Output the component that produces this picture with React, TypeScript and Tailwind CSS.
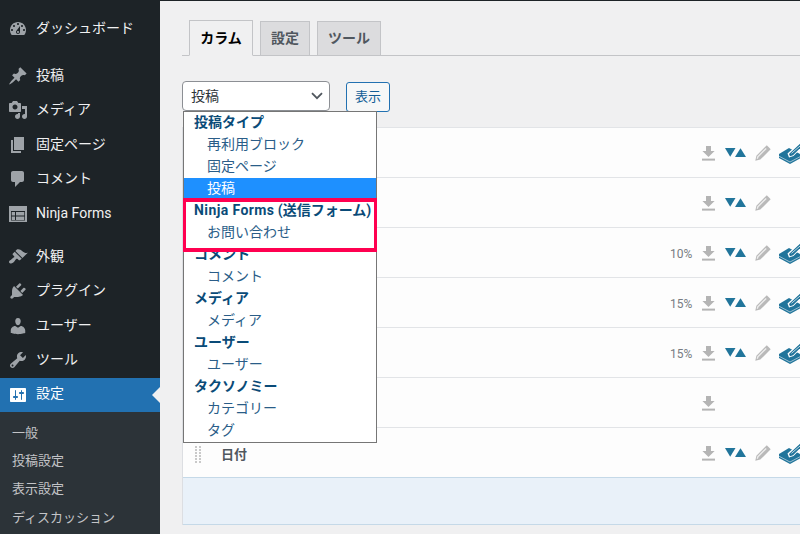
import React from "react";

const P: Record<string, string> = {
  dash: "M3.76 16h12.48c1.1-1.37 1.76-3.11 1.76-5 0-4.42-3.58-8-8-8s-8 3.58-8 8c0 1.89.66 3.63 1.76 5zM10 4c.55 0 1 .45 1 1s-.45 1-1 1-1-.45-1-1 .45-1 1-1zM6 6c.55 0 1 .45 1 1s-.45 1-1 1-1-.45-1-1 .45-1 1-1zm8 0c.55 0 1 .45 1 1s-.45 1-1 1-1-.45-1-1 .45-1 1-1zm-5.37 5.55L12 7v6c0 1.1-.9 2-2 2s-2-.9-2-2c0-.57.24-1.08.63-1.45zM4 10c.55 0 1 .45 1 1s-.45 1-1 1-1-.45-1-1 .45-1 1-1zm12 0c.55 0 1 .45 1 1s-.45 1-1 1-1-.45-1-1 .45-1 1-1zm-5 3c0-.55-.45-1-1-1s-1 .45-1 1 .45 1 1 1 1-.45 1-1z",
  post: "M10.44 3.02l1.82-1.82 6.36 6.35-1.83 1.82c-1.05-.68-2.48-.57-3.41.36l-.75.75c-.92.93-1.04 2.35-.35 3.41l-1.83 1.82-2.41-2.41-2.8 2.79c-.42.42-3.38 2.71-3.8 2.29s1.86-3.39 2.28-3.81l2.79-2.79L4.1 9.36l1.83-1.82c1.05.69 2.48.57 3.4-.36l.75-.75c.93-.92 1.05-2.35.36-3.41z",
  media: "M13 11V4c0-.55-.45-1-1-1h-1.67L9 1H5L3.67 3H2c-.55 0-1 .45-1 1v7c0 .55.45 1 1 1h10c.55 0 1-.45 1-1zM7 4.5c1.38 0 2.5 1.12 2.5 2.5S8.38 9.5 7 9.5 4.5 8.38 4.5 7 5.62 4.5 7 4.5zM14 6h5v10.5c0 1.38-1.12 2.5-2.5 2.5S14 17.88 14 16.5s1.12-2.5 2.5-2.5c.17 0 .34.02.5.05V9h-3V6zm-4 8.05V13h2v3.5c0 1.38-1.12 2.5-2.5 2.5S7 17.88 7 16.5 8.12 14 9.5 14c.17 0 .34.02.5.05z",
  page: "M6 15V2h10v13H6zm-1 1h8v2H3V5h2v11z",
  comment: "M5 2h9c1.1 0 2 .9 2 2v7c0 1.1-.9 2-2 2h-2l-5 5v-5H5c-1.1 0-2-.9-2-2V4c0-1.1.9-2 2-2z",
  form: "M1 2h18v16H1V2zm2 5v9.5h14V7H3zm.7 1h3.3v3.5H3.7V8zm4.3 0h8.3v3.5H8V8zm-4.3 4.5h3.3V16H3.7v-3.5zm4.3 0h8.3V16H8v-3.5z",
  brush: "M14.48 11.06L7.41 3.99l1.5-1.5c.5-.56 2.3-.47 3.51.32 1.21.8 1.43 1.28 2.91 2.1 1.18.64 2.45 1.26 4.45.85zm-.71.71L6.7 4.7 4.93 6.47c-.39.39-.39 1.02 0 1.41l1.06 1.06c.39.39.39 1.03 0 1.42-.6.6-1.43 1.11-2.21 1.69-.35.26-.7.53-1.01.84C1.43 13.23.4 14.85 1.46 15.91c.27.27.62.45 1 .53.23.05.51.05.73.04.79-.09 1.78-.59 2.46-1.27.31-.31.58-.66.84-1.01.58-.78 1.09-1.61 1.69-2.21.39-.39 1.03-.39 1.42 0l1.06 1.06c.39.39 1.02.39 1.41 0z",
  plugin: "M13.11 4.36L9.87 7.6 8 5.73l3.24-3.24c.35-.34 1.05-.2 1.56.32.52.51.66 1.21.31 1.55zm-8 1.77l.91-1.12 9.01 9.01-1.19.84c-.71.71-2.63 1.16-3.82 1.16H6.14L4.9 17.26c-.59.59-1.54.59-2.12 0-.59-.58-.59-1.53 0-2.12l1.24-1.24v-3.88c0-1.13.4-3.19 1.09-3.89zm7.26 3.97l3.24-3.24c.34-.35 1.04-.21 1.55.31.52.51.66 1.21.31 1.55l-3.24 3.25z",
  users: "M10 9.25c-2.27 0-2.73-3.44-2.73-3.44C7 4.02 7.82 2 9.97 2c2.16 0 2.98 2.02 2.71 3.81 0 0-.41 3.44-2.68 3.44zm0 2.57L12.72 10c2.39 0 4.52 2.33 4.52 4.53v2.49s-3.65 1.13-7.24 1.13c-3.65 0-7.24-1.13-7.24-1.13v-2.49c0-2.25 1.94-4.48 4.47-4.48z",
  tools: "M16.68 9.77c-1.34 1.34-3.3 1.67-4.95.99l-5.41 6.52c-.99.99-2.59.99-3.58 0s-.99-2.59 0-3.57l6.52-5.42c-.68-1.65-.35-3.61.99-4.95 1.28-1.28 3.12-1.62 4.72-1.06l-2.89 2.89 2.82 2.82 2.86-2.87c.53 1.58.18 3.39-1.08 4.65zM3.81 16.21c.4.39 1.04.39 1.43 0 .4-.4.4-1.04 0-1.43-.39-.4-1.03-.4-1.43 0-.39.39-.39 1.03 0 1.43z",
  settings: "M18 16V4c0-.55-.45-1-1-1H3c-.55 0-1 .45-1 1v12c0 .55.45 1 1 1h14c.55 0 1-.45 1-1zM8 11h1c.55 0 1 .45 1 1s-.45 1-1 1H8v1.5c0 .28-.22.5-.5.5s-.5-.22-.5-.5V13H6c-.55 0-1-.45-1-1s.45-1 1-1h1V5.5c0-.28.22-.5.5-.5s.5.22.5.5V11zm5-2h-1c-.55 0-1-.45-1-1s.45-1 1-1h1V5.5c0-.28.22-.5.5-.5s.5.22.5.5V7h1c.55 0 1 .45 1 1s-.45 1-1 1h-1v5.5c0 .28-.22.5-.5.5s-.5-.22-.5-.5V9z",
};

function MenuIcon({ d, white }: { d: string; white?: boolean }) {
  return (
    <svg viewBox="0 0 20 20" className={`w-[20px] h-[20px] shrink-0 ${white ? "text-white" : "text-[#9ea3a8]"}`} fill="currentColor" fillRule="evenodd">
      <path d={d} />
    </svg>
  );
}

function MenuItem({ icon, label }: { icon: string; label: string }) {
  return (
    <div className="flex items-center h-[34.5px] pl-[8px] gap-[8px] text-[14px] text-[#f0f0f1]">
      <MenuIcon d={P[icon]} />
      <span className="pb-[1px]">{label}</span>
    </div>
  );
}

function Download() {
  return (
    <svg viewBox="0 0 13 15" className="w-[13px] h-[15px] mt-[2px]" fill="#b4b4b4">
      <path d="M4 0h5v5h3.6L6.5 11 .4 5H4z" />
      <rect x="0" y="12.6" width="13" height="2" />
    </svg>
  );
}
function Sort() {
  return (
    <svg viewBox="0 0 21 9" className="w-[21px] h-[9px]" fill="#21759b">
      <path d="M0 0h10.5L5.2 8.8z" />
      <path d="M10 9l5.5-8.8L21 9z" />
    </svg>
  );
}
function Pencil() {
  return (
    <svg viewBox="0 0 16 16" className="w-[16px] h-[16px]">
      <path d="M11.8 0.3L15.7 4.2 5.3 14.6 0.3 15.7 1.4 10.7z" fill="#b9b9b9" />
      <path d="M3.4 11.2L11.2 3.4M2.2 13.8L3.2 11" stroke="#ececec" strokeWidth="1.4" fill="none" />
    </svg>
  );
}
function Stack() {
  return (
    <svg viewBox="0 0 25 22" className="w-[25px] h-[22px] shrink-0">
      <path d="M0 12L10 6 22 12.5V16L11 22 0 16z" fill="#21759b" />
      <path d="M0 14.2L11 20 22 14.2" stroke="#cfe0ea" strokeWidth="0.7" fill="none" />
      <path d="M8.5 11.5L10 15.5 14.5 14 24.5 4 21 .5z" fill="#ffffff" />
      <path d="M10 12L11 14.3 14 13.2 23.3 4 21 1.8z" fill="#21759b" />
      <path d="M12.5 11.3L21.3 3.8" stroke="#ffffff" strokeWidth="0.7" fill="none" />
    </svg>
  );
}

function Handle() {
  return (
    <svg viewBox="0 0 6 17" className="w-[6px] h-[17px] shrink-0" fill="#c9c9c9">
      {[0, 3, 6, 9, 12, 15].map((y) => (
        <g key={y}>
          <rect x="0" y={y} width="2" height="2" />
          <rect x="4" y={y} width="2" height="2" />
        </g>
      ))}
    </svg>
  );
}

function Row({ pct, sort = true, edit = true, stack = true, label, last }: { pct?: string; sort?: boolean; edit?: boolean; stack?: boolean; label?: string; last?: boolean }) {
  return (
    <div className={`h-[50px] flex items-center border-b bg-[#fdfdfd] ${last ? "border-[#c5d9e8]" : "border-[#e2e4e7]"}`}>
      {label && (
        <div className="flex items-center pl-[12px] pt-[4px] gap-[20px]">
          <Handle />
          <span className="text-[13px] font-bold text-[#50575e]">{label}</span>
        </div>
      )}
      <div className="ml-auto w-[134px] flex items-center">
        <span className="w-[22px] pt-[2px] text-[12px] text-[#787c82] text-right">{pct}</span>
        <div className="ml-[10px] w-[13px]"><Download /></div>
        <div className="ml-[10px] w-[21px]">{sort && <Sort />}</div>
        <div className="ml-[9px] w-[16px]">{edit && <Pencil />}</div>
        <div className="ml-[8px] w-[25px]">{stack && <Stack />}</div>
      </div>
    </div>
  );
}

const opts: [React.ReactNode, boolean, boolean?][] = [
  ["投稿タイプ", true],
  ["再利用ブロック", false],
  ["固定ページ", false],
  ["投稿", false, true],
  [<><span className="tracking-[0.4px]">Ninja Forms</span> (送信フォーム)</>, true],
  ["お問い合わせ", false],
  ["コメント", true],
  ["コメント", false],
  ["メディア", true],
  ["メディア", false],
  ["ユーザー", true],
  ["ユーザー", false],
  ["タクソノミー", true],
  ["カテゴリー", false],
  ["タグ", false],
];

export default function App() {
  return (
    <div
      className="w-[800px] h-[534px] flex overflow-hidden bg-[#f0f0f1]"
      style={{ fontFamily: 'Roboto, "Noto Sans CJK JP", sans-serif' }}
    >
      <aside className="w-[160px] shrink-0 bg-[#1d2327] flex flex-col pt-[12px]">
        <MenuItem icon="dash" label="ダッシュボード" />
        <div className="mt-[12px]">
          <MenuItem icon="post" label="投稿" />
          <MenuItem icon="media" label="メディア" />
          <MenuItem icon="page" label="固定ページ" />
          <MenuItem icon="comment" label="コメント" />
          <MenuItem icon="form" label="Ninja Forms" />
        </div>
        <div className="mt-[8.5px]">
          <MenuItem icon="brush" label="外観" />
          <MenuItem icon="plugin" label="プラグイン" />
          <MenuItem icon="users" label="ユーザー" />
          <MenuItem icon="tools" label="ツール" />
        </div>
        <div className="relative h-[34px] flex items-center pl-[8px] gap-[8px] bg-[#2271b1] text-[14px] text-white">
          <MenuIcon d={P.settings} white />
          <span className="pb-[3px]">設定</span>
          <div className="absolute right-0 top-[9px] w-0 h-0 border-y-[8px] border-y-transparent border-r-[8px] border-r-[#f0f0f1]" />
        </div>
        <div className="flex-1 bg-[#2c3338] pt-[7px] text-[13px] text-[#c3c4c7]">
          {["一般", "投稿設定", "表示設定", "ディスカッション"].map((t) => (
            <div key={t} className="h-[28.3px] flex items-center pl-[12px]">{t}</div>
          ))}
        </div>
      </aside>

      <main className="flex-1 min-w-0 pl-[22px] overflow-hidden">
        <div className="h-[20px] -ml-[22px]">
          <div className="h-px bg-[#1d2327]" />
        </div>
        <div className="h-[36px] flex items-end gap-[7px] pl-[7px] border-b border-[#c3c4c7]">
          <div className="h-[36px] w-[64px] -mb-px flex items-center justify-center border border-[#c3c4c7] border-b-[#f0f0f1] bg-[#f0f0f1] text-[14px] font-bold text-black">カラム</div>
          <div className="h-[35px] w-[50px] -mb-px pb-[1px] flex items-center justify-center border border-[#c3c4c7] bg-[#dcdcde] text-[14px] font-bold text-[#50575e]">設定</div>
          <div className="h-[35px] w-[64px] -mb-px pb-[1px] flex items-center justify-center border border-[#c3c4c7] bg-[#dcdcde] text-[14px] font-bold text-[#50575e]">ツール</div>
        </div>

        <div className="relative mt-[25px] flex items-start gap-[16px]">
          <div className="w-[148px] h-[30px] flex items-center justify-between pl-[8px] pr-[6px] rounded-[4px] border border-[#8c8f94] bg-white text-[14px] text-[#2c3338]">
            <span>投稿</span>
            <svg viewBox="0 0 12 8" className="w-[12px] h-[8px]" fill="none" stroke="#50575e" strokeWidth="1.8">
              <path d="M1 1.2l5 5 5-5" />
            </svg>
          </div>
          <div className="mt-px w-[44px] h-[30px] flex items-center justify-center rounded-[3px] border border-[#2271b1] bg-[#f6f7f7] text-[13px] text-[#135e96]">表示</div>

          <div className="absolute z-10 left-px top-[30px] w-[194px] border border-[#767676] bg-white text-[14px]">
            {opts.map(([t, group, sel], i) => (
              <div
                key={i}
                className={`h-[22px] pb-[2px] flex items-center whitespace-pre ${group ? "pl-[10px] font-bold text-[#0a4b78]" : "pl-[23px] text-[#2a5d88]"} ${sel ? "bg-[#1e90ff] text-white" : ""}`}
              >
                <span>{t}</span>
              </div>
            ))}
            <div className="absolute left-[-1px] right-[-1px] top-[86px] h-[54px] border-x-[3px] border-y-[4px] border-[#ff0050]" />
          </div>
        </div>

        <div className="mt-[15px] -mr-[4px] border-l border-[#dcdee2]">
          <div className="border-t border-[#e2e4e7]" />
          <Row />
          <Row stack={false} />
          <Row pct="10%" />
          <Row pct="15%" />
          <Row pct="15%" />
          <Row sort={false} edit={false} stack={false} />
          <Row label="日付" last />
          <div className="h-[47px] bg-[#e9f1f9] border-b border-[#c5d9e8]" />
        </div>
      </main>
    </div>
  );
}
